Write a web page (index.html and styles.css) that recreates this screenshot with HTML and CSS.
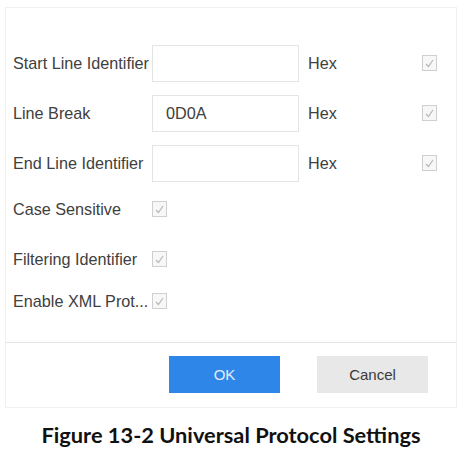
FILE: index.html
```html
<!DOCTYPE html>
<html lang="en">
<head>
    <meta charset="UTF-8">
    <title>Universal Protocol Settings</title>
    <link rel="stylesheet" href="styles.css">
</head>
<body>

    <!-- Settings dialog -->
    <div class="dialog">
        <div class="form">
            <div class="row">
                <span class="label">Start Line Identifier</span>
                <div class="input"></div>
                <span class="unit">Hex</span>
                <span class="check"><svg viewBox="0 0 15 16"><rect x="0.5" y="0.5" width="14" height="15" fill="#f7f7f7" stroke="#cfcfcf"/><path d="M4 9 L6.5 11.5 L11 5" fill="none" stroke="#b8b8b8" stroke-width="1.2"/></svg></span>
            </div>
            <div class="row">
                <span class="label">Line Break</span>
                <div class="input">0D0A</div>
                <span class="unit">Hex</span>
                <span class="check"><svg viewBox="0 0 15 16"><rect x="0.5" y="0.5" width="14" height="15" fill="#f7f7f7" stroke="#cfcfcf"/><path d="M4 9 L6.5 11.5 L11 5" fill="none" stroke="#b8b8b8" stroke-width="1.2"/></svg></span>
            </div>
            <div class="row">
                <span class="label">End Line Identifier</span>
                <div class="input"></div>
                <span class="unit">Hex</span>
                <span class="check"><svg viewBox="0 0 15 16"><rect x="0.5" y="0.5" width="14" height="15" fill="#f7f7f7" stroke="#cfcfcf"/><path d="M4 9 L6.5 11.5 L11 5" fill="none" stroke="#b8b8b8" stroke-width="1.2"/></svg></span>
            </div>
            <div class="row short">
                <span class="label">Case Sensitive</span>
                <span class="check"><svg viewBox="0 0 15 16"><rect x="0.5" y="0.5" width="14" height="15" fill="#f7f7f7" stroke="#cfcfcf"/><path d="M4 9 L6.5 11.5 L11 5" fill="none" stroke="#b8b8b8" stroke-width="1.2"/></svg></span>
            </div>
            <div class="row short spaced">
                <span class="label">Filtering Identifier</span>
                <span class="check"><svg viewBox="0 0 15 16"><rect x="0.5" y="0.5" width="14" height="15" fill="#f7f7f7" stroke="#cfcfcf"/><path d="M4 9 L6.5 11.5 L11 5" fill="none" stroke="#b8b8b8" stroke-width="1.2"/></svg></span>
            </div>
            <div class="row short">
                <span class="label">Enable XML Prot...</span>
                <span class="check"><svg viewBox="0 0 15 16"><rect x="0.5" y="0.5" width="14" height="15" fill="#f7f7f7" stroke="#cfcfcf"/><path d="M4 9 L6.5 11.5 L11 5" fill="none" stroke="#b8b8b8" stroke-width="1.2"/></svg></span>
            </div>
        </div>
        <div class="footer">
            <button class="btn ok">OK</button>
            <button class="btn cancel">Cancel</button>
        </div>
    </div>

    <p class="caption">Figure 13-2 Universal Protocol Settings</p>

</body>
</html>
```

FILE: styles.css
```css
body {
    margin: 0;
    background-color: #fff;
    font-family: "Liberation Sans", Arial, sans-serif;
    color: #404040;
}

.dialog {
    margin: 7px 0 0 5px;
    width: 450px;
    border: 1px solid #f0f0f0;
}

.form {
    padding: 30px 0 20px 7px;
}

.row {
    display: flex;
    align-items: center;
    height: 50px;
    font-size: 16.2px;
}

.row.short {
    height: 42px;
}

.row.spaced {
    margin-top: 8px;
}

.label {
    width: 137px;
    white-space: nowrap;
}

.row .label + .input,
.row.short .label + .check {
    margin-left: 2px;
}

.input {
    width: 147px;
    height: 37px;
    box-sizing: border-box;
    border: 1px solid #e4e4e4;
    padding-left: 13px;
    display: flex;
    align-items: center;
}

.unit {
    margin-left: 9px;
    width: 114px;
}

.check {
    display: inline-flex;
    width: 15px;
    height: 16px;
}

.check svg {
    width: 15px;
    height: 16px;
}

.footer {
    border-top: 1px solid #e4e4e4;
    padding: 13px 0 14px 163px;
    display: flex;
    gap: 37px;
}

.btn {
    width: 111px;
    height: 37px;
    border: none;
    font-family: "Liberation Sans", Arial, sans-serif;
    font-size: 15px;
}

.btn.ok {
    background-color: #2f86e9;
    color: #e4eefb;
}

.btn.cancel {
    background-color: #e8e8e8;
    color: #3a3a3a;
}

.caption {
    margin: 13px 0 0 5px;
    width: 452px;
    text-align: center;
    font-family: Lato, sans-serif;
    font-weight: bold;
    font-size: 21.8px;
    color: #111;
}
```
